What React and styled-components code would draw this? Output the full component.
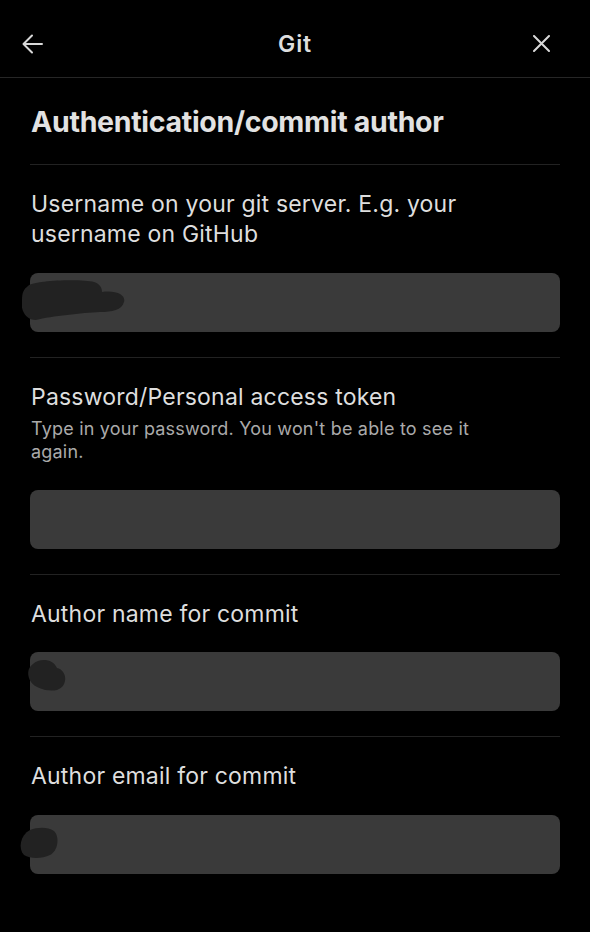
import React from "react";
import styled, { createGlobalStyle } from "styled-components";

const Global = createGlobalStyle`
  html, body { margin: 0; padding: 0; background: #000; }
  body { font-family: Inter, Roboto, "Noto Sans", sans-serif; color: #dedede; -webkit-font-smoothing: antialiased; }
  * { box-sizing: border-box; }
`;

const Page = styled.div`
  width: 590px;
  min-height: 932px;
  background: #000;
`;

const Header = styled.header`
  height: 78px;
  padding-top: 10px;
  display: grid;
  grid-template-columns: 78px 1fr 78px;
  align-items: center;
  border-bottom: 1px solid #262626;
`;

const IconButton = styled.button`
  background: none;
  border: 0;
  padding: 0;
  color: #d8d8d8;
  display: flex;
  align-items: center;
  justify-content: ${(p) => (p.$end ? "flex-end" : "flex-start")};
  padding-left: ${(p) => (p.$end ? "0" : "22px")};
  padding-right: ${(p) => (p.$end ? "40px" : "0")};
  height: 40px;
`;

const Title = styled.h1`
  margin: 0;
  text-align: center;
  font-size: 23px;
  font-weight: 600;
  color: #dedede;
  letter-spacing: 0.8px;
`;

const Content = styled.main`
  padding: 0 30px;
`;

const SectionTitle = styled.h2`
  margin: 0;
  padding: 27px 0 25px 1px;
  font-size: 28.5px;
  line-height: 34px;
  font-weight: 700;
  color: #e2e2e2;
  letter-spacing: -0.3px;
  border-bottom: 1px solid #222;
`;

const Field = styled.section`
  padding: 24px 0 25px;
  border-bottom: ${(p) => (p.$last ? "none" : "1px solid #222")};
`;

const Label = styled.label`
  display: block;
  max-width: 470px;
  padding-left: 1px;
  font-size: 23px;
  line-height: 30px;
  color: #dedede;
  letter-spacing: 0.2px;
`;

const Description = styled.p`
  margin: 5px 0 0;
  padding-left: 1px;
  font-size: 18px;
  line-height: 23px;
  color: #aaaaaa;
  letter-spacing: 0.2px;
  max-width: 470px;
`;

const InputWrap = styled.div`
  position: relative;
  margin-top: ${(p) => p.$gap || 24}px;
`;

const Input = styled.div`
  height: 59px;
  border-radius: 8px;
  background: #3a3a3a;
`;

const Redaction = styled.svg`
  position: absolute;
  left: ${(p) => p.$left}px;
  top: ${(p) => p.$top}px;
  pointer-events: none;
`;

const BackIcon = () => (
  <svg width="22" height="22" viewBox="0 0 22 22" fill="none" stroke="currentColor" strokeWidth="2" strokeLinecap="round" strokeLinejoin="round">
    <path d="M20 11H2M10 2.5L1.5 11L10 19.5" />
  </svg>
);

const CloseIcon = () => (
  <svg width="17" height="17" viewBox="0 0 17 17" fill="none" stroke="currentColor" strokeWidth="2" strokeLinecap="round">
    <path d="M1 1L16 16M16 1L1 16" />
  </svg>
);

const BlobA = () => (
  <Redaction $left={-8} $top={7} width="104" height="42" viewBox="0 0 104 42">
    <path
      d="M6 6 C12 0 60 -1 72 2 C78 4 80 8 80 12 C96 10 104 16 102 22 C100 30 90 32 78 32 C60 33 30 36 14 40 C4 40 -2 30 0 20 C0 12 2 9 6 6 Z"
      fill="#222"
    />
  </Redaction>
);

const BlobB = () => (
  <Redaction $left={-3} $top={6} width="45" height="40" viewBox="0 0 45 40">
    <path d="M6 6 C12 0 26 0 30 10 C40 12 42 28 30 32 C20 34 8 30 4 24 C0 18 0 10 6 6 Z" fill="#222" />
  </Redaction>
);

const BlobC = () => (
  <Redaction $left={-12} $top={12} width="45" height="36" viewBox="0 0 45 36">
    <path d="M12 3 C20 0 30 0 36 4 C42 10 40 24 32 28 C24 32 12 32 6 28 C0 22 2 8 12 3 Z" fill="#222" />
  </Redaction>
);

export default function App() {
  return (
    <Page>
      <Global />
      <Header>
        <IconButton aria-label="Back"><BackIcon /></IconButton>
        <Title>Git</Title>
        <IconButton $end aria-label="Close"><CloseIcon /></IconButton>
      </Header>
      <Content>
        <SectionTitle>Authentication/commit author</SectionTitle>
        <Field>
          <Label>Username on your git server. E.g. your username on GitHub</Label>
          <InputWrap>
            <Input />
            <BlobA />
          </InputWrap>
        </Field>
        <Field>
          <Label>Password/Personal access token</Label>
          <Description>Type in your password. You won't be able to see it again.</Description>
          <InputWrap $gap={27}>
            <Input />
          </InputWrap>
        </Field>
        <Field>
          <Label>Author name for commit</Label>
          <InputWrap $gap={23}>
            <Input />
            <BlobB />
          </InputWrap>
        </Field>
        <Field $last>
          <Label>Author email for commit</Label>
          <InputWrap>
            <Input />
            <BlobC />
          </InputWrap>
        </Field>
      </Content>
    </Page>
  );
}
